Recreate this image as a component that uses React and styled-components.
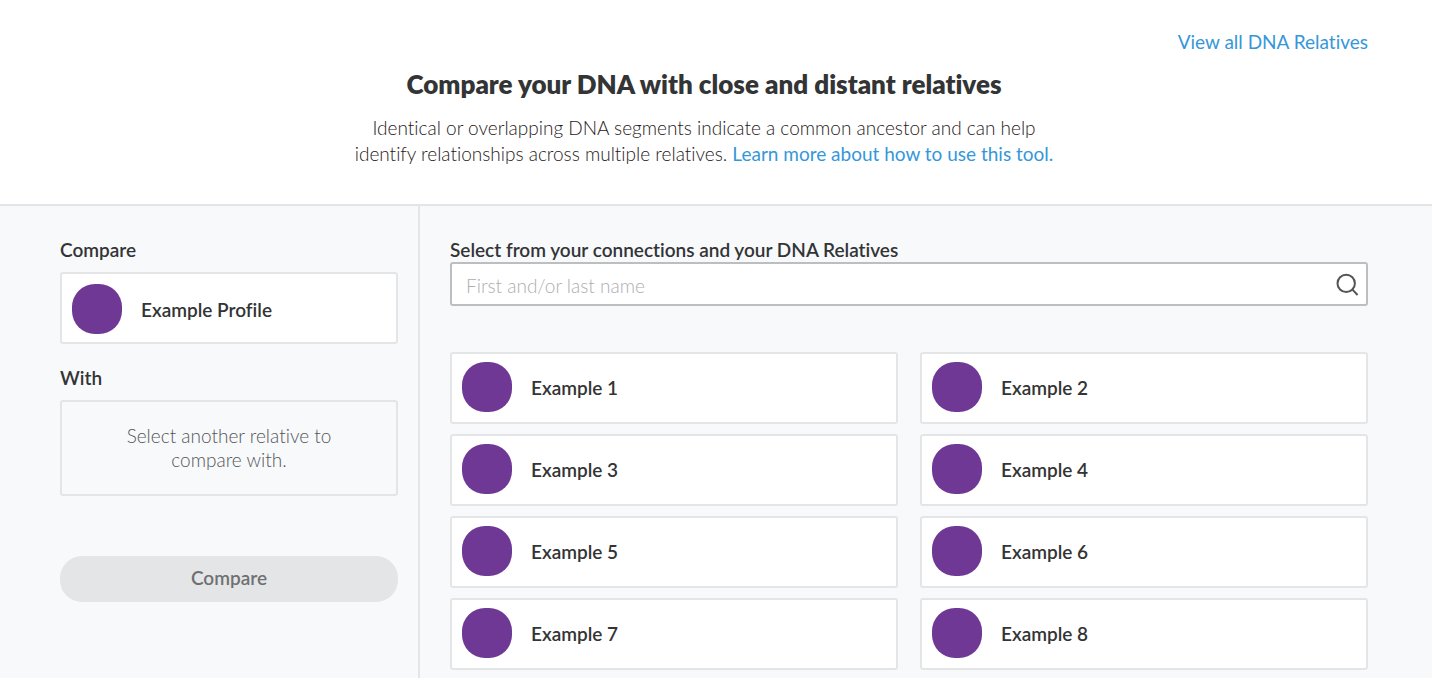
import React, { useState } from 'react';
import styled, { createGlobalStyle } from 'styled-components';

const relatives = [
    "Example 1",
    "Example 2",
    "Example 3",
    "Example 4",
    "Example 5",
    "Example 6",
    "Example 7",
    "Example 8"
];

export default function App() {
    const [search, setSearch] = useState("");
    const shown = relatives.filter(name => name.toLowerCase().includes(search.toLowerCase()));

    return (
        <>
            <GlobalStyle />
            <Page>
                <Header>
                    <TopNav>
                        <Link href="#relatives">View all DNA Relatives</Link>
                    </TopNav>
                    <Title>Compare your DNA with close and distant relatives</Title>
                    <Intro>
                        Identical or overlapping DNA segments indicate a common ancestor and can help<br />
                        identify relationships across multiple relatives. <Link href="#learn">Learn more about how to use this tool.</Link>
                    </Intro>
                </Header>
                <Content>
                    <Sidebar>
                        <SectionTitle>Compare</SectionTitle>
                        <Profile>
                            <Avatar />
                            <Name>Example Profile</Name>
                        </Profile>
                        <SectionTitle>With</SectionTitle>
                        <EmptySlot>
                            <p>Select another relative to compare with.</p>
                        </EmptySlot>
                        <CompareButton type="button" disabled>Compare</CompareButton>
                    </Sidebar>
                    <Main>
                        <SearchLabel htmlFor="search">Select from your connections and your DNA Relatives</SearchLabel>
                        <SearchBox>
                            <SearchInput
                                id="search"
                                type="text"
                                placeholder="First and/or last name"
                                value={search}
                                onChange={e => setSearch(e.target.value)}
                            />
                            <SearchIcon />
                        </SearchBox>
                        <Relatives>
                            {shown.map(name =>
                                <Relative key={name} type="button">
                                    <Avatar />
                                    <Name>{name}</Name>
                                </Relative>
                            )}
                        </Relatives>
                    </Main>
                </Content>
            </Page>
        </>
    )
}

function SearchIcon() {
    return (
        <svg width="24" height="24" viewBox="0 0 24 24" fill="none" stroke="#555555" strokeWidth="2" aria-hidden="true">
            <circle cx="11.2" cy="11.4" r="8.7" />
            <path d="M17.2 17.4L22.6 23" />
        </svg>
    )
}

const GlobalStyle = createGlobalStyle`
    *{
        box-sizing: border-box;
    }
    body{
        margin:0;
        background-color: #F8F9FB;
        color:#333435;
        font-family: Lato, 'Open Sans', sans-serif;
        font-size: 19px;
        line-height: 24px;
        font-variant-ligatures: none;
    }
    h1, h2, p{
        margin:0;
    }
    button, input{
        font-family: inherit;
        font-size: inherit;
        line-height: inherit;
        font-variant-ligatures: inherit;
        color: inherit;
    }
`;

const Page = styled.div`
    min-height:100vh;
    display:flex;
    flex-direction: column;
`;

const Header = styled.header`
    background-color: #FFFFFF;
    border-bottom: 2px solid #E4E5E6;
    padding:30px 64px 37px 40px;
    text-align: center;
`;

const TopNav = styled.nav`
    display:flex;
    justify-content: flex-end;
`;

const Link = styled.a`
    color:#3597D9;
    font-weight: 400;
    text-decoration: none;
`;

const Title = styled.h1`
    margin-top:14px;
    font-size: 26px;
    font-weight: 800;
    line-height: 32px;
`;

const Intro = styled.p`
    margin-top:15px;
    color:#1F2021;
    font-weight: 300;
    line-height: 26px;
`;

const Content = styled.div`
    flex:1;
    display:flex;
`;

const Sidebar = styled.aside`
    width:420px;
    flex-shrink: 0;
    border-right: 2px solid #E4E5E6;
    padding:32px 20px 32px 60px;
    display:flex;
    flex-direction: column;
`;

const SectionTitle = styled.h2`
    margin-bottom:10px;
    font-size: 19px;
    font-weight: 600;
    line-height: 24px;
`;

const Profile = styled.div`
    margin-bottom:22px;
    background-color: #FFFFFF;
    border: 2px solid #E4E5E6;
    border-radius: 3px;
    padding:10px 10px 8px 10px;
    display:flex;
    align-items: center;
    gap:19px;
`;

const Relative = styled.button`
    background-color: #FFFFFF;
    border: 2px solid #E4E5E6;
    border-radius: 3px;
    padding:8px 10px 10px 10px;
    display:flex;
    align-items: center;
    gap:19px;
    text-align: left;
    cursor: pointer;
`;

const Avatar = styled.span`
    width:50px;
    height:50px;
    flex-shrink: 0;
    border-radius: 23px;
    background-color: #6E3894;
`;

const Name = styled.span`
    padding-top:2px;
    font-weight: 600;
`;

const EmptySlot = styled.div`
    border: 2px solid #E4E5E6;
    border-radius: 3px;
    padding:22px 40px;
    font-weight: 300;
    text-align: center;
    color:#55565A;
    p{
        max-width:220px;
        margin:0 auto;
    }
`;

const CompareButton = styled.button`
    margin-top:60px;
    height:46px;
    padding:0 20px 3px 20px;
    border:none;
    border-radius: 22px;
    background-color: #E4E5E6;
    color:#6F7072;
    font-weight: 600;
`;

const Main = styled.main`
    flex:1;
    min-width:0;
    padding:32px 64px 8px 30px;
`;

const SearchLabel = styled.label`
    display:block;
    font-weight: 600;
`;

const SearchBox = styled.div`
    height:44px;
    background-color: #FFFFFF;
    border: 2px solid #BDBEC0;
    border-radius: 3px;
    padding:0 7px 0 14px;
    display:flex;
    align-items: center;
`;

const SearchInput = styled.input`
    flex:1;
    min-width:0;
    padding:3px 0 0 0;
    border:none;
    outline:none;
    background:none;
    font-weight: 300;
    &::placeholder{
        color:#ADAEB0;
        opacity:1;
    }
`;

const Relatives = styled.div`
    margin-top:46px;
    display:grid;
    grid-template-columns: 1fr 1fr;
    gap:10px 22px;
`;
